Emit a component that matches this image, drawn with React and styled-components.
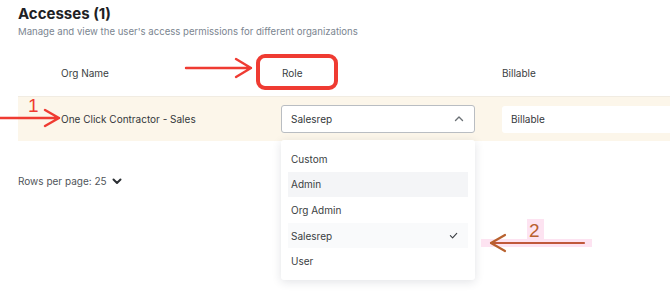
import React from 'react'
import styled, { createGlobalStyle } from 'styled-components'

const GlobalStyle = createGlobalStyle`
  html, body {
    margin: 0;
    padding: 0;
    background: #ffffff;
    font-family: Inter, "Noto Sans", sans-serif;
    color: #2b2f33;
  }
`

const Page = styled.div`
  position: relative;
  width: 670px;
  height: 304px;
  overflow: hidden;
  padding-left: 18px;
  box-sizing: border-box;
`

const Heading = styled.div`
  padding-top: 4px;
`

const Title = styled.h2`
  margin: 0;
  font-size: 15px;
  font-weight: 700;
  line-height: 20px;
  color: #1e2124;
`

const Subtitle = styled.p`
  margin: 1px 0 0;
  font-size: 9.6px;
  line-height: 14px;
  color: #7b8590;
`

const Table = styled.div`
  margin-top: 18px;
`

const Row = styled.div`
  display: grid;
  grid-template-columns: 263px 221px 1fr;
  align-items: center;
  height: ${(p) => p.height}px;
  box-sizing: border-box;
  padding-bottom: ${(p) => (p.highlight ? 0 : 7)}px;
  background: ${(p) => (p.highlight ? '#fcf6ea' : 'transparent')};
  border-top: ${(p) => (p.highlight ? '1px solid #f1ece2' : 'none')};
`

const HeadCell = styled.div`
  font-size: 10px;
  color: #3a3e42;
  padding-left: ${(p) => p.indent || 0}px;
`

const Cell = styled.div`
  position: relative;
  font-size: 10px;
  color: #33373b;
  padding-left: ${(p) => p.indent || 0}px;
`

const SelectBox = styled.div`
  display: flex;
  align-items: center;
  justify-content: space-between;
  width: 194px;
  height: 28px;
  box-sizing: border-box;
  padding: 0 10px 0 9px;
  border: 1px solid #b9bdc2;
  border-radius: 3px;
  background: #ffffff;
  font-size: 10px;
  color: #33373b;
`

const InputBox = styled.div`
  display: flex;
  align-items: center;
  height: 27px;
  box-sizing: border-box;
  padding: 0 9px;
  border-radius: 3px 0 0 3px;
  background: #ffffff;
  font-size: 10px;
  color: #33373b;
`

const Menu = styled.ul`
  position: absolute;
  top: 35px;
  left: 0;
  width: 194px;
  margin: 0;
  padding: 6px 7px;
  box-sizing: border-box;
  list-style: none;
  background: #ffffff;
  border-radius: 3px;
  box-shadow: 0 2px 10px rgba(30, 40, 60, 0.13);
  z-index: 2;
`

const MenuItem = styled.li`
  display: flex;
  align-items: center;
  justify-content: space-between;
  height: 25.6px;
  padding: 0 10px 0 3px;
  font-size: 10px;
  color: #3a3e42;
  background: ${(p) => p.bg || 'transparent'};
`

const Footer = styled.div`
  display: flex;
  align-items: center;
  gap: 5px;
  margin-top: 34px;
  font-size: 10px;
  color: #50555a;
`

const Overlay = styled.svg`
  position: absolute;
  top: 0;
  left: 0;
  pointer-events: none;
  z-index: 5;
`

const Chevron = ({ up, size = 10, weight = 1.4, color = '#6b7075' }) => (
  <svg width={size} height={size} viewBox="0 0 10 10">
    <path
      d={up ? 'M1.5 6.5 L5 3 L8.5 6.5' : 'M1.5 3.5 L5 7 L8.5 3.5'}
      fill="none"
      stroke={color}
      strokeWidth={weight}
      strokeLinecap="round"
      strokeLinejoin="round"
    />
  </svg>
)

const Check = () => (
  <svg width="9" height="9" viewBox="0 0 10 10">
    <path d="M1.5 5.2 L4 7.6 L8.6 2.6" fill="none" stroke="#3a3e42" strokeWidth="1.2" strokeLinecap="round" strokeLinejoin="round" />
  </svg>
)

const roles = [
  { name: 'Custom' },
  { name: 'Admin', bg: '#f4f5f7' },
  { name: 'Org Admin' },
  { name: 'Salesrep', bg: '#f9fafb', selected: true },
  { name: 'User' },
]

function Annotations() {
  return (
    <Overlay width="670" height="304" viewBox="0 0 670 304">
      <g stroke="#ef3b32" fill="none" strokeLinecap="round" strokeLinejoin="round">
        <path d="M0 118 L59 118 M45 110 L59 118 L45 126" strokeWidth="2.4" />
        <path d="M186 68 L251 68 M236 59 L251 68 L236 77" strokeWidth="2.4" />
        <rect x="258" y="56" width="78" height="32" rx="7" strokeWidth="4" />
      </g>
      <text x="28" y="112" fontSize="19" fontFamily="Liberation Sans, sans-serif" fill="#ef3b32">1</text>
      <rect x="481" y="239" width="111" height="8" fill="#fde3f1" />
      <rect x="527" y="219" width="17" height="20" fill="#fde3f1" />
      <g stroke="#b8612e" fill="none" strokeLinecap="round" strokeLinejoin="round">
        <path d="M491 243 L584 243" strokeWidth="2.2" stroke="#c0583a" />
        <path d="M505 235 L491 243 L505 251" strokeWidth="2.2" />
      </g>
      <text x="529" y="237" fontSize="19" fontFamily="Liberation Sans, sans-serif" fill="#b8612e">2</text>
    </Overlay>
  )
}

export default function App() {
  return (
    <>
      <GlobalStyle />
      <Page>
        <Heading>
          <Title>Accesses (1)</Title>
          <Subtitle>Manage and view the user's access permissions for different organizations</Subtitle>
        </Heading>
        <Table>
          <Row height={39}>
            <HeadCell indent={43}>Org Name</HeadCell>
            <HeadCell indent={1}>Role</HeadCell>
            <HeadCell>Billable</HeadCell>
          </Row>
          <Row height={45} highlight>
            <Cell indent={43}>One Click Contractor - Sales</Cell>
            <Cell>
              <SelectBox>
                Salesrep
                <Chevron up />
              </SelectBox>
              <Menu>
                {roles.map((r) => (
                  <MenuItem key={r.name} bg={r.bg}>
                    {r.name}
                    {r.selected && <Check />}
                  </MenuItem>
                ))}
              </Menu>
            </Cell>
            <Cell>
              <InputBox>Billable</InputBox>
            </Cell>
          </Row>
        </Table>
        <Footer>
          Rows per page: 25
          <Chevron weight={2} color="#2b2f33" />
        </Footer>
        <Annotations />
      </Page>
    </>
  )
}
